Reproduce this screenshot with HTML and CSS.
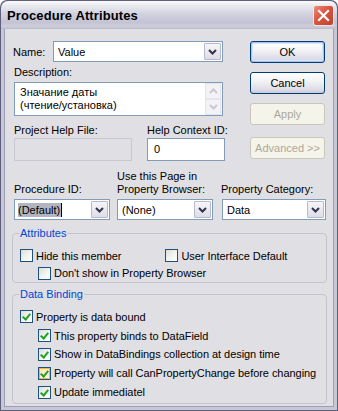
FILE: index.html
```html
<!DOCTYPE html>
<html>
<head>
  <title>Procedure Attributes</title>
  <link rel="stylesheet" href="styles.css">
</head>
<body>
<div class="window">
  <div class="titlebar">
    <span class="title">Procedure Attributes</span>
    <span class="close">
      <svg width="13" height="13" viewBox="0 0 13 13"><path d="M2 2 L11 11 M11 2 L2 11" stroke="#fff" stroke-width="2.2" stroke-linecap="square"/></svg>
    </span>
  </div>
  <div class="client">
    <div class="top">
      <div class="fields">
        <div class="name-row">
          <label class="name-label">Name:</label>
          <div class="combo name-combo">
            <span class="value">Value</span>
            <span class="drop"><svg width="9" height="6" viewBox="0 0 9 6"><path d="M1 1 L4.5 4.5 L8 1" fill="none" stroke="#31344a" stroke-width="2"/></svg></span>
          </div>
        </div>
        <label class="label desc-label">Description:</label>
        <div class="textarea">
          <div class="text">Значание даты<br>(чтение/установка)</div>
          <div class="vscroll">
            <span class="sbtn"><svg width="9" height="6" viewBox="0 0 9 6"><path d="M1 5 L4.5 1.5 L8 5" fill="none" stroke="#c9c8d3" stroke-width="2"/></svg></span>
            <span class="sbtn"><svg width="9" height="6" viewBox="0 0 9 6"><path d="M1 1 L4.5 4.5 L8 1" fill="none" stroke="#c9c8d3" stroke-width="2"/></svg></span>
          </div>
        </div>
        <div class="help-row">
          <div class="help-col help-file">
            <label class="label">Project Help File:</label>
            <div class="input disabled"></div>
          </div>
          <div class="help-col help-id">
            <label class="label">Help Context ID:</label>
            <div class="input">0</div>
          </div>
        </div>
      </div>
      <div class="buttons">
        <button class="btn default">OK</button>
        <button class="btn">Cancel</button>
        <button class="btn off">Apply</button>
        <button class="btn off">Advanced &gt;&gt;</button>
      </div>
    </div>

    <div class="combo-row">
      <div class="combo-col col-proc">
        <label class="label">Procedure ID:</label>
        <div class="combo">
          <span class="value"><span class="sel">(Default)</span><span class="caret"></span></span>
          <span class="drop"><svg width="9" height="6" viewBox="0 0 9 6"><path d="M1 1 L4.5 4.5 L8 1" fill="none" stroke="#31344a" stroke-width="2"/></svg></span>
        </div>
      </div>
      <div class="combo-col col-page">
        <label class="label">Use this Page in<br>Property Browser:</label>
        <div class="combo">
          <span class="value">(None)</span>
          <span class="drop"><svg width="9" height="6" viewBox="0 0 9 6"><path d="M1 1 L4.5 4.5 L8 1" fill="none" stroke="#31344a" stroke-width="2"/></svg></span>
        </div>
      </div>
      <div class="combo-col col-cat">
        <label class="label">Property Category:</label>
        <div class="combo">
          <span class="value">Data</span>
          <span class="drop"><svg width="9" height="6" viewBox="0 0 9 6"><path d="M1 1 L4.5 4.5 L8 1" fill="none" stroke="#31344a" stroke-width="2"/></svg></span>
        </div>
      </div>
    </div>

    <fieldset class="group attrs">
      <legend>Attributes</legend>
      <div class="row">
        <span class="check"><span class="box"></span>Hide this member</span>
        <span class="check ui-default"><span class="box"></span>User Interface Default</span>
      </div>
      <div class="row sub">
        <span class="check"><span class="box"></span>Don't show in Property Browser</span>
      </div>
    </fieldset>

    <fieldset class="group binding">
      <legend>Data Binding</legend>
      <div class="row">
        <span class="check"><span class="box on"></span>Property is data bound</span>
      </div>
      <div class="row sub">
        <span class="check"><span class="box on"></span>This property binds to DataField</span>
      </div>
      <div class="row sub">
        <span class="check"><span class="box on"></span>Show in DataBindings collection at design time</span>
      </div>
      <div class="row sub">
        <span class="check"><span class="box on hover"></span>Property will call CanPropertyChange before changing</span>
      </div>
      <div class="row sub">
        <span class="check"><span class="box on"></span>Update immediatel</span>
      </div>
    </fieldset>
  </div>
</div>
</body>
</html>
```

FILE: styles.css
```css
body {
  margin: 0;
  background: #ffffff;
  font-family: "Liberation Sans", Arial, sans-serif;
  font-size: 11px;
  color: #000000;
}

.window {
  width: 338px;
  height: 411px;
  box-sizing: border-box;
  background: #5e5f7c;
  border-radius: 7px 7px 0 0;
  padding: 0 1px 1px 1px;
  display: flex;
  flex-direction: column;
  overflow: hidden;
}

.titlebar {
  height: 28px;
  flex-shrink: 0;
  border-radius: 7px 7px 0 0;
  background: linear-gradient(#fdfdfe 0%, #eeeef3 12%, #d3d3e0 45%, #c3c3d4 75%, #cdcdda 92%, #b8b8c9 100%);
  display: flex;
  align-items: center;
  padding: 0 3px 0 6px;
  margin-top: 1px;
}

.title {
  flex: 1;
  font-weight: bold;
  font-size: 13px;
  color: #000000;
  padding-top: 1px;
  letter-spacing: 0.1px;
}

.close {
  width: 21px;
  height: 21px;
  box-sizing: border-box;
  border: 1px solid #f4e6e3;
  border-radius: 3px;
  background: linear-gradient(135deg, #ea8f7f 0%, #d8553f 45%, #c0402c 100%);
  display: flex;
  align-items: center;
  justify-content: center;
  margin-top: 1px;
}

.client {
  flex: 1;
  min-height: 0;
  background: #e0dfe3;
  border: 3px solid #c8c7d6;
  border-top: none;
  box-shadow: inset 1px 0 0 #9e9db6, inset -1px 0 0 #9e9db6, inset 0 -1px 0 #9e9db6;
  padding: 12px 0 0 9px;
}

.top {
  display: flex;
  align-items: flex-start;
}

.fields {
  width: 212px;
}

.name-row {
  display: flex;
  align-items: center;
  height: 21px;
}

.name-label {
  width: 40px;
}

.name-combo {
  width: 170px;
}

.label {
  display: block;
  line-height: 13px;
  white-space: nowrap;
}

.desc-label {
  margin-top: 4px;
  padding-left: 1px;
}

.combo {
  box-sizing: border-box;
  height: 21px;
  background: #ffffff;
  border: 1px solid #7f9db9;
  display: flex;
  align-items: center;
  padding: 1px;
}

.combo .value {
  flex: 1;
  padding-left: 3px;
  display: flex;
  align-items: center;
  white-space: nowrap;
}

.drop {
  width: 15px;
  height: 15px;
  border: 1px solid #bab9cc;
  border-radius: 1px;
  background: linear-gradient(#f6f6f9, #dedde7);
  display: flex;
  align-items: center;
  justify-content: center;
}

.sel {
  background: #b2b4bf;
  padding: 1px 1px 1px 0;
  margin-left: -1px;
}

.caret {
  width: 1px;
  height: 14px;
  background: #000000;
}

.textarea {
  margin-top: 3px;
  margin-left: 1px;
  width: 209px;
  height: 34px;
  box-sizing: border-box;
  border: 1px solid #7f9db9;
  background: #ffffff;
  display: flex;
}

.textarea .text {
  flex: 1;
  padding: 3px 0 0 5px;
  line-height: 13px;
}

.vscroll {
  width: 17px;
  display: flex;
  flex-direction: column;
  background: #f6f6f8;
}

.sbtn {
  flex: 1;
  margin: 0 1px 0 0;
  border: 1px solid #e5e4ec;
  background: #f3f3f6;
  display: flex;
  align-items: center;
  justify-content: center;
}

.help-row {
  display: flex;
  margin-top: 8px;
}

.help-col .label {
  padding-left: 1px;
}

.help-file {
  width: 133px;
}

.help-id {
  width: 79px;
}

.input {
  margin-top: 1px;
  margin-left: 1px;
  box-sizing: border-box;
  height: 23px;
  border: 1px solid #7f9db9;
  background: #ffffff;
  padding: 4px 0 0 6px;
}

.help-file .input {
  width: 118px;
}

.help-id .input {
  width: 78px;
}

.input.disabled {
  background: #e0dfe3;
  border-color: #c9c7d0;
}

.buttons {
  margin-left: 25px;
  display: flex;
  flex-direction: column;
  gap: 9px;
}

.btn {
  width: 75px;
  height: 22px;
  box-sizing: border-box;
  font-family: "Liberation Sans", Arial, sans-serif;
  font-size: 11px;
  color: #000000;
  border: 1px solid #003c74;
  border-radius: 3px;
  background: linear-gradient(#ffffff 0%, #f3f3f6 40%, #dcdbe6 85%, #c9c8d8 100%);
  padding: 0;
}

.btn.default {
  box-shadow: inset 0 0 0 1px #a7c2ee, inset 0 0 0 2px #d8e4f8;
}

.btn.off {
  color: #aca899;
  border-color: #c9c7ba;
  background: #f5f4ea;
}

.btn.off:last-child {
  margin-top: 3px;
}

.combo-row {
  display: flex;
  margin-top: 9px;
  align-items: flex-end;
}

.combo-col {
  display: flex;
  flex-direction: column;
}

.combo-col .label {
  margin-bottom: 3px;
}

.col-proc {
  margin-left: 1px;
  width: 96px;
}

.col-page {
  margin-left: 7px;
  width: 96px;
}

.col-cat {
  margin-left: 9px;
  width: 104px;
}

.col-cat .label {
  margin-left: -1px;
}

.group {
  margin: 7px 0 0 -1px;
  width: 315px;
  box-sizing: border-box;
  border: 1px solid #c5c4cd;
  border-radius: 4px;
  padding: 0 0 0 7px;
}

.group legend {
  color: #0046d5;
  padding: 0 1px;
  line-height: 13px;
  margin-left: -1px;
}

.attrs .row:first-of-type {
  margin-top: 7px;
}

.attrs .row {
  height: 17.5px;
}

.binding {
  margin-top: 5px;
  padding-bottom: 2px;
}

.binding .row:first-of-type {
  margin-top: 6.5px;
}

.row {
  display: flex;
  height: 18px;
  align-items: center;
  letter-spacing: -0.05px;
}

.binding .row {
  height: 18.8px;
}

.row.sub {
  padding-left: 18px;
}

.check {
  display: flex;
  align-items: center;
  white-space: nowrap;
}

.ui-default {
  margin-left: 44px;
}

.box {
  width: 13px;
  height: 13px;
  box-sizing: border-box;
  border: 1px solid #1c5180;
  background: linear-gradient(135deg, #dcdcd7 0%, #f2f2ee 50%, #ffffff 100%);
  margin-right: 3px;
  position: relative;
}

.box.on::after {
  content: "";
  position: absolute;
  left: 2px;
  top: 0px;
  width: 3px;
  height: 6px;
  border: solid #21a121;
  border-width: 0 2px 2px 0;
  transform: translate(1px, 1px) rotate(40deg);
}

.box.hover {
  background: linear-gradient(135deg, #fde3a5 0%, #fbf1d9 60%, #fffaf0 100%);
  box-shadow: inset 0 0 0 1px #f8b636;
}
```
